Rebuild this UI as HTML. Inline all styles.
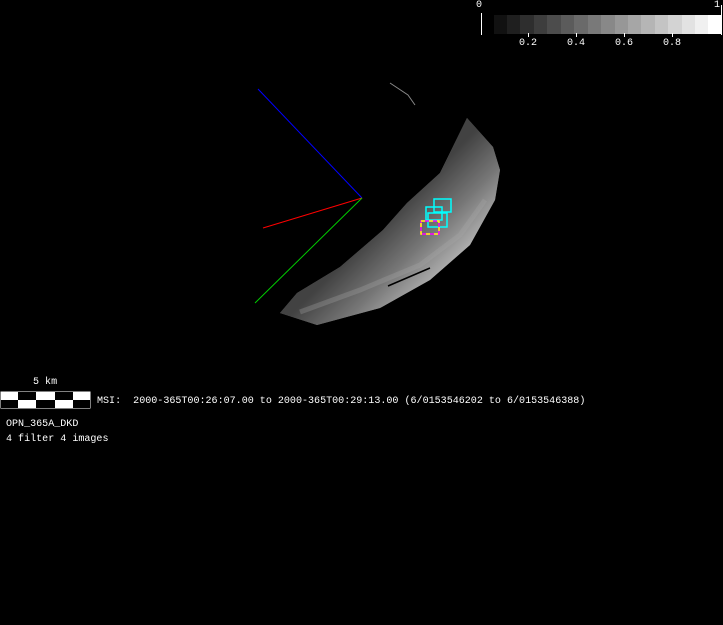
<!DOCTYPE html>
<html><head><style>
html,body{margin:0;padding:0;background:#000;width:723px;height:625px;overflow:hidden}
.t{position:absolute;color:#fff;font-family:"Liberation Mono",monospace;font-size:10.05px;line-height:12px;white-space:pre}
</style></head><body>
<svg width="723" height="625" style="position:absolute;left:0;top:0">
<defs>
<linearGradient id="g" x1="430" y1="175" x2="490" y2="235" gradientUnits="userSpaceOnUse">
<stop offset="0" stop-color="#2a2a2a"/><stop offset="0.5" stop-color="#707070"/><stop offset="1" stop-color="#c8c8c8"/>
</linearGradient>
</defs>
<g>
<rect x="494" y="15" width="14" height="19" fill="#111"/>
<rect x="507" y="15" width="14" height="19" fill="#1f1f1f"/>
<rect x="520" y="15" width="14" height="19" fill="#2e2e2e"/>
<rect x="534" y="15" width="14" height="19" fill="#3d3d3d"/>
<rect x="547" y="15" width="14" height="19" fill="#4c4c4c"/>
<rect x="561" y="15" width="14" height="19" fill="#5b5b5b"/>
<rect x="574" y="15" width="14" height="19" fill="#6a6a6a"/>
<rect x="588" y="15" width="14" height="19" fill="#797979"/>
<rect x="601" y="15" width="14" height="19" fill="#888"/>
<rect x="615" y="15" width="14" height="19" fill="#979797"/>
<rect x="628" y="15" width="14" height="19" fill="#a6a6a6"/>
<rect x="641" y="15" width="14" height="19" fill="#b5b5b5"/>
<rect x="655" y="15" width="14" height="19" fill="#c4c4c4"/>
<rect x="668" y="15" width="14" height="19" fill="#d3d3d3"/>
<rect x="682" y="15" width="14" height="19" fill="#e2e2e2"/>
<rect x="695" y="15" width="14" height="19" fill="#f0f0f0"/>
<rect x="708" y="15" width="14" height="19" fill="#fff"/>
<line x1="481.5" y1="13" x2="481.5" y2="35" stroke="#fff"/>
<line x1="528.5" y1="33" x2="528.5" y2="37" stroke="#fff"/>
<line x1="576.5" y1="33" x2="576.5" y2="37" stroke="#fff"/>
<line x1="624.5" y1="33" x2="624.5" y2="37" stroke="#fff"/>
<line x1="672.5" y1="33" x2="672.5" y2="37" stroke="#fff"/>
<line x1="721.5" y1="5" x2="721.5" y2="35" stroke="#fff"/>
</g>
<path d="M280,313 L297,293 L340,267 L383,230 L407,203 L440,173 L467,118 L493,147 L500,170 L495,200 L470,245 L430,280 L380,308 L317,325 Z" fill="#888"/>
<path d="M280,313 L297,293 L340,267 L383,230 L407,203 L440,173 L467,118 L493,147 L500,170 L495,200 L470,245 L430,280 L380,308 L317,325 Z" fill="url(#g)" opacity="0.75"/>
<path d="M300,312 L360,290 L420,265 L460,235 L485,200" stroke="#aaa" stroke-width="5" fill="none" opacity="0.3"/>
<path d="M390,83 L408,95 L415,105" stroke="#888" fill="none"/>
<path d="M388,286 L430,268" stroke="#000" stroke-width="1.5"/>
<line x1="258" y1="89" x2="362" y2="198" stroke="#00f"/>
<line x1="263" y1="228" x2="362" y2="198" stroke="#f00"/>
<line x1="255" y1="303" x2="362" y2="198" stroke="#0c0"/>
<g fill="none" stroke="#0ff" stroke-width="1.5">
<rect x="434" y="199" width="17" height="13"/>
<rect x="426" y="207" width="16" height="13"/>
<rect x="428" y="213" width="19" height="14"/>
</g>
<rect x="421" y="221" width="18" height="13" fill="none" stroke="#f0f" stroke-width="1.5"/>
<rect x="421" y="221" width="18" height="13" fill="none" stroke="#ff0" stroke-width="1.5" stroke-dasharray="4 4"/>
<rect x="0.5" y="391.5" width="90" height="17" fill="#fff"/>
<rect x="18" y="392" width="18" height="8" fill="#000"/>
<rect x="55" y="392" width="18" height="8" fill="#000"/>
<rect x="1" y="400" width="17" height="8" fill="#000"/>
<rect x="36" y="400" width="19" height="8" fill="#000"/>
<rect x="73" y="400" width="17" height="8" fill="#000"/>
</svg>
<div class="t" style="left:476px;top:0">0</div>
<div class="t" style="left:714px;top:0">1</div>
<div class="t" style="left:519px;top:38px">0.2</div>
<div class="t" style="left:567px;top:38px">0.4</div>
<div class="t" style="left:615px;top:38px">0.6</div>
<div class="t" style="left:663px;top:38px">0.8</div>
<div class="t" style="left:33px;top:377px">5 km</div>
<div class="t" style="left:97px;top:396px">MSI:  2000-365T00:26:07.00 to 2000-365T00:29:13.00 (6/0153546202 to 6/0153546388)</div>
<div class="t" style="left:6px;top:419px">OPN_365A_DKD</div>
<div class="t" style="left:6px;top:434px">4 filter 4 images</div>
</body></html>
